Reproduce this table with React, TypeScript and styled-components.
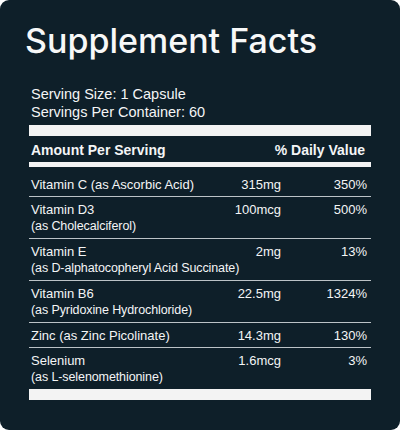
import React from 'react';
import styled, { createGlobalStyle } from 'styled-components';

interface Nutrient {
  name: string;
  source?: string;
  amount: string;
  dailyValue: string;
}

const nutrients: Nutrient[] = [
  { name: 'Vitamin C (as Ascorbic Acid)', amount: '315mg', dailyValue: '350%' },
  { name: 'Vitamin D3', source: '(as Cholecalciferol)', amount: '100mcg', dailyValue: '500%' },
  { name: 'Vitamin E', source: '(as D-alphatocopheryl Acid Succinate)', amount: '2mg', dailyValue: '13%' },
  { name: 'Vitamin B6', source: '(as Pyridoxine Hydrochloride)', amount: '22.5mg', dailyValue: '1324%' },
  { name: 'Zinc (as Zinc Picolinate)', amount: '14.3mg', dailyValue: '130%' },
  { name: 'Selenium', source: '(as L-selenomethionine)', amount: '1.6mcg', dailyValue: '3%' },
];

const GlobalStyle = createGlobalStyle`
  html, body {
    margin: 0;
    padding: 0;
    background: #ffffff;
  }
`;

const Card = styled.div`
  width: 400px;
  height: 430px;
  box-sizing: border-box;
  background: #0e1f29;
  border-radius: 9px;
  padding: 24px 29px 0 29px;
  color: #f4f5f6;
  font-family: 'Liberation Sans', Arial, sans-serif;
`;

const Title = styled.h1`
  margin: 0 0 0 -4px;
  font-family: 'Inter', 'Liberation Sans', sans-serif;
  font-size: 34px;
  font-weight: 500;
  line-height: 34px;
  color: #f7f8f8;
`;

// Serving size lines
const ServingInfo = styled.div`
  margin-top: 27px;
  padding-left: 2px;
  font-size: 14.5px;
  line-height: 18px;
`;

const Bar = styled.div<{ $height: number; $gap?: number }>`
  height: ${props => props.$height}px;
  margin-top: ${props => props.$gap ?? 0}px;
  background: #f3f3f3;
`;

const HeaderRow = styled.div`
  display: flex;
  justify-content: space-between;
  padding: 6px 6px 4px 2px;
  font-size: 14px;
  font-weight: 700;
  line-height: 16px;
`;

const Table = styled.div`
  margin-top: 5px;
`;

const Row = styled.div<{ $last: boolean }>`
  display: grid;
  grid-template-columns: 1fr auto 86px;
  align-items: start;
  padding: 4px 4px 3px 2px;
  font-size: 13px;
  line-height: 17px;
  border-bottom: ${props => props.$last ? 'none' : '1px solid #bcc3c7'};
`;

const NameCell = styled.div`
  display: flex;
  flex-direction: column;
  white-space: nowrap;
`;

// second line, e.g. "(as Cholecalciferol)"
const Source = styled.span`
  font-size: 12.5px;
  letter-spacing: -0.1px;
`;

const ValueCell = styled.div`
  text-align: right;
  white-space: nowrap;
`;

const App: React.FC = () => {
  return (
    <>
      <GlobalStyle />
      <Card>
        <Title>Supplement Facts</Title>

        <ServingInfo>
          <div>Serving Size: 1 Capsule</div>
          <div>Servings Per Container: 60</div>
        </ServingInfo>

        <Bar $height={11} $gap={4} />

        <HeaderRow>
          <span>Amount Per Serving</span>
          <span>% Daily Value</span>
        </HeaderRow>

        <Bar $height={5} />

        <Table>
          {nutrients.map((item, i) => (
            <Row key={item.name} $last={i === nutrients.length - 1}>
              <NameCell>
                <span>{item.name}</span>
                {item.source && <Source>{item.source}</Source>}
              </NameCell>
              <ValueCell>{item.amount}</ValueCell>
              <ValueCell>{item.dailyValue}</ValueCell>
            </Row>
          ))}
        </Table>

        <Bar $height={11} />
      </Card>
    </>
  );
};

export default App;
